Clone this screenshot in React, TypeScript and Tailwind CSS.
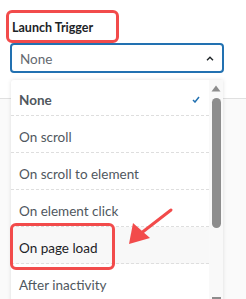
import React from "react";

const font = { fontFamily: '"Lato", "Noto Sans", sans-serif' };

const options = [
  "None",
  "On scroll",
  "On scroll to element",
  "On element click",
  "On page load",
  "After inactivity",
];

export default function App() {
  const selected = "None";
  const hovered = "On page load";

  return (
    <div className="relative w-[246px] h-[299px] overflow-hidden bg-white" style={font}>
      {/* field */}
      <div className="pt-[20px] px-[10px]">
        <div className="pl-[2px] text-[12.5px] leading-[16px] font-bold text-[#1d2327]">Launch Trigger</div>
        <div className="mt-[7px] h-[30px] w-[214px] rounded-[4px] border-2 border-[#2271b1] flex items-center justify-between pl-[8px] pr-[7px]">
          <span className="pt-[3px] text-[13.5px] text-[#646970]">None</span>
          <svg width="8" height="5" viewBox="0 0 8 5" className="mr-[1px]">
            <path d="M1 4.2 L4 1.2 L7 4.2" fill="none" stroke="#1d2327" strokeWidth="1.4" />
          </svg>
        </div>
      </div>
      <div className="mt-[25px] h-px bg-[#e0e0e0]" />
      <div className="h-[200px] bg-[#fafafa]" />

      {/* open menu */}
      <div className="absolute left-[11px] top-[80px] w-[212px] h-[230px] bg-white rounded-tl-[3px] shadow-[0_0_4px_rgba(0,0,0,0.12)] flex">
        <ul className="w-[198px]">
          {options.map((o, i) => (
            <li
              key={o}
              className={`${i === 0 ? "h-[36px]" : "h-[37px]"} border-b border-dashed border-[#dedede] flex items-center justify-between pt-[6px] pl-[8px] pr-[9px] text-[13.5px] ${
                o === hovered ? "bg-[#f8f8f8] text-[#1d2327]" : "text-[#50575e]"
              } ${o === selected ? "font-bold text-[#2271b1]" : ""}`}
            >
              <span>{o}</span>
              {o === selected && (
                <svg width="8" height="7" viewBox="0 0 8 7" className="-mt-[2px]">
                  <path d="M1 4 L3 6 L7 1" fill="none" stroke="#2271b1" strokeWidth="1.5" />
                </svg>
              )}
            </li>
          ))}
        </ul>
        <div className="w-[14px] bg-[#f9f9f9] flex flex-col items-center pt-[5px]">
          <svg width="10" height="7" viewBox="0 0 10 7">
            <path d="M5 0.5 L9.5 6.5 L0.5 6.5 Z" fill="#8d8d8d" />
          </svg>
          <div className="mt-[6px] w-[9px] h-[130px] rounded-full bg-[#8d8d8d]" />
          <div className="mt-[69px] w-[9px] h-[4px] bg-[#8d8d8d]" />
        </div>
      </div>

      {/* annotations */}
      <div className="absolute left-[6px] top-[10px] w-[113px] h-[33px] rounded-[6px] border-[3px] border-[#f24b4b]" />
      <div className="absolute left-[10px] top-[223px] w-[105px] h-[47px] rounded-[6px] border-[3px] border-[#f24b4b]" />
      <svg className="absolute left-0 top-0" width="246" height="299" viewBox="0 0 246 299">
        <path d="M171 210 L140 234" stroke="#f24b4b" strokeWidth="3" strokeLinecap="round" />
        <path d="M129 244 L133 223 L150 238 Z" fill="#f24b4b" />
      </svg>
    </div>
  );
}
